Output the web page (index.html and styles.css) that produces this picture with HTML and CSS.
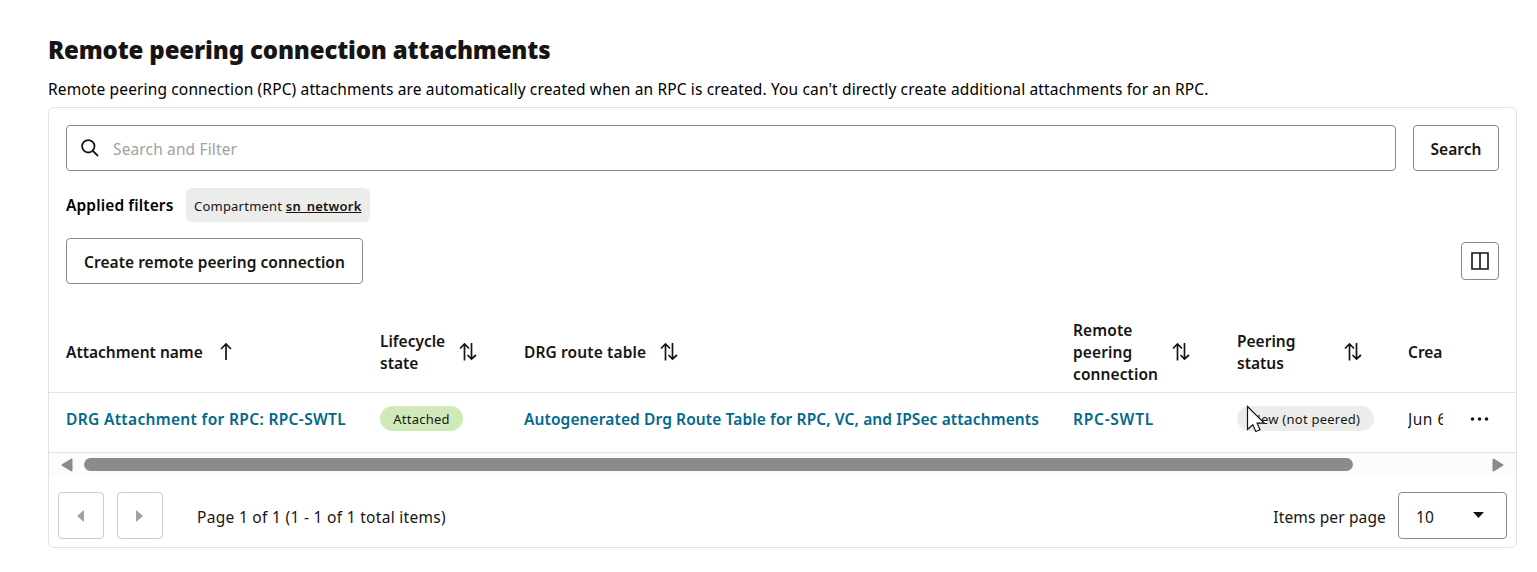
FILE: index.html
```
<!DOCTYPE html>
<html lang="en">
<head>
<meta charset="utf-8">
<title>Remote peering connection attachments</title>
<link rel="stylesheet" href="styles.css">
</head>
<body>
<svg class="sprite" aria-hidden="true">
  <symbol id="sort" viewBox="0 0 18 20"><path d="M5.500 18.500V2M1 6.500 5.500 2 10 6.500M12.500 1V17M8.500 13 12.500 17 17 13"/></symbol>
</svg>
<main class="page">
  <h1 class="title"><span>Remote peering connection attachments</span></h1>
  <p class="subtitle"><span>Remote peering connection (RPC) attachments are automatically created when an RPC is created. You can't directly create additional attachments for an RPC.</span></p>
  <section class="card">
    <div class="search-row">
      <div class="search-box">
        <svg class="search-icon" viewBox="0 0 18 18"><circle cx="7.300" cy="7.300" r="6.200"/><path d="m11.800 11.800 5.200 5.200"/></svg>
        <span class="placeholder">Search and Filter</span>
      </div>
      <button class="btn search-btn"><span>Search</span></button>
    </div>
    <div class="filters">
      <span class="filters-label">Applied filters</span>
      <span class="chip"><span>Compartment <b>sn_network</b></span></span>
    </div>
    <div class="toolbar">
      <button class="btn create-btn"><span>Create remote peering connection</span></button>
      <button class="btn columns-btn" aria-label="Columns"><svg viewBox="0 0 18 18"><path d="M1 1H17V17H1ZM9 1V17"/></svg></button>
    </div>
    <div class="grid head">
      <div class="cell"><span>Attachment name</span><svg class="sort up" viewBox="0 0 12 20"><path d="M6 18V2M1 7 6 2 11 7"/></svg></div>
      <div class="cell"><span>Lifecycle<br>state</span><svg class="sort"><use href="#sort"/></svg></div>
      <div class="cell route-head"><span>DRG route table</span><svg class="sort"><use href="#sort"/></svg></div>
      <div class="cell remote-head"><span>Remote<br>peering<br>connection</span><svg class="sort"><use href="#sort"/></svg></div>
      <div class="cell status-head"><span>Peering<br>status</span><svg class="sort"><use href="#sort"/></svg></div>
      <div class="cell clip"><span>Crea</span></div>
    </div>
    <div class="grid row">
      <div class="cell"><a class="link name-link">DRG Attachment for RPC: RPC-SWTL</a></div>
      <div class="cell"><span class="badge green">Attached</span></div>
      <div class="cell"><a class="link table-link">Autogenerated Drg Route Table for RPC, VC, and IPSec attachments</a></div>
      <div class="cell"><a class="link rpc-link">RPC-SWTL</a></div>
      <div class="cell pointer-host"><span class="badge grey">New (not peered)</span>
        <svg class="pointer" viewBox="0 0 20 28"><path d="M1.500 1.500V24.500L6.800 19.800 9.800 26.500 14 24.700 11.200 18.200H18.200Z"/></svg>
      </div>
      <div class="cell clip date"><span>Jun 6</span></div>
      <div class="cell more"><svg viewBox="0 0 18 4"><circle cx="2" cy="2" r="1.800"/><circle cx="9" cy="2" r="1.800"/><circle cx="16" cy="2" r="1.800"/></svg></div>
    </div>
    <div class="scrollbar">
      <svg class="arrow" viewBox="0 0 12 14"><path d="M10.500 1.500V12.500L1.500 7Z"/></svg>
      <div class="track"><div class="thumb"></div></div>
      <svg class="arrow" viewBox="0 0 12 14"><path d="M1.500 1.500V12.500L10.500 7Z"/></svg>
    </div>
    <div class="pager">
      <button class="btn page-btn" aria-label="Previous"><svg viewBox="0 0 7 14"><path d="M7 1V13L0 7Z"/></svg></button>
      <button class="btn page-btn" aria-label="Next"><svg viewBox="0 0 7 14"><path d="M0 1V13L7 7Z"/></svg></button>
      <span class="page-info">Page 1 of 1 (1 - 1 of 1 total items)</span>
      <span class="per-page">Items per page</span>
      <div class="select"><span>10</span><svg viewBox="0 0 11 6"><path d="M0 0H11L5.500 6Z"/></svg></div>
    </div>
  </section>
</main>
</body>
</html>
```
FILE: styles.css
```
* { box-sizing: border-box; }
body { margin: 0; background: #fff; color: #161513; font: 400 15.5px/22px "Noto Sans", "Open Sans", sans-serif; letter-spacing: 0.14px; white-space: nowrap; }
svg { display: block; flex: none; }
.sprite { position: absolute; width: 0; height: 0; }
.page { padding: 33px 20px 0 48px; }
.title { margin: 0; font-size: 24px; line-height: 34px; font-weight: 900; letter-spacing: -0.16px; }
.subtitle { margin: 11px 0 7px; line-height: 22px; color: #000; }
.card { width: 1469px; height: 441px; border: 1px solid #e3e2e1; border-radius: 6px; }
.btn { display: flex; align-items: center; justify-content: center; padding: 2px 0 0; border: 1px solid #8b8a89; border-radius: 4px; background: #fff; color: #161513; font: inherit; font-weight: 600; letter-spacing: 0.03px; }
.search-row { display: flex; justify-content: space-between; padding: 17px 17px 0; }
.search-box { display: flex; align-items: center; width: 1330px; height: 46px; padding-left: 14px; border: 1px solid #8b8a89; border-radius: 4px; }
.search-icon { width: 18px; height: 18px; fill: none; stroke: #161513; stroke-width: 1.800; }
.placeholder { margin-left: 14px; padding-top: 2px; color: #a3a2a1; }
.search-btn { width: 86px; height: 46px; }
.filters { display: flex; align-items: center; padding: 17px 17px 0; }
.filters-label { width: 120px; font-weight: 600; letter-spacing: 0.12px; color: #000; }
.chip { display: flex; align-items: center; width: 184px; height: 34px; padding: 2px 0 0 8px; border-radius: 6px; background: #ececeb; font-size: 13px; letter-spacing: 0.22px; }
.chip b { font-weight: 600; text-decoration: underline; text-decoration-skip-ink: none; }
.toolbar { display: flex; align-items: center; justify-content: space-between; padding: 16px 17px 0; }
.create-btn { width: 297px; height: 46px; }
.columns-btn { width: 38px; height: 38px; padding: 0 1px 0 0; }
.columns-btn svg { width: 18px; height: 18px; fill: none; stroke: #161513; stroke-width: 1.600; }
.grid { display: grid; grid-template-columns: 314px 144px 549px 164px 171px 35px 1fr; padding-left: 17px; border-bottom: 1px solid #e3e2e1; }
.cell { display: flex; align-items: center; }
.head { height: 81px; margin-top: 28px; font-weight: 600; letter-spacing: 0; align-items: center; }
.head .cell { gap: 14px; }
.sort { width: 18px; height: 20px; fill: none; stroke: #161513; stroke-width: 1.700; }
.sort.up { width: 12px; margin-left: 3px; }
.status-head .sort { margin-left: 35px; }
.head .route-head { letter-spacing: 0.12px; }
.head .remote-head { letter-spacing: 0.1px; }
.clip { overflow: hidden; }
.row { height: 60px; padding-bottom: 7px; }
.link { color: #00688c; font-weight: 600; letter-spacing: 0.11px; }
.name-link { letter-spacing: 0.34px; }
.rpc-link { letter-spacing: 0.75px; }
.badge { display: flex; align-items: center; justify-content: center; height: 25px; margin-bottom: 1px; padding-top: 1px; border-radius: 13px; font-size: 13px; letter-spacing: 0.25px; }
.green { width: 83px; background: #cfeab8; }
.grey { width: 137px; background: #ececeb; }
.date { letter-spacing: 0.5px; }
.pointer-host { position: relative; }
.pointer { position: absolute; left: 9px; top: 12px; width: 20px; height: 28px; fill: #fff; stroke: #161513; stroke-width: 1.200; }
.more { padding-left: 27px; }
.more svg { width: 19px; height: 4px; fill: #161513; }
.scrollbar { display: flex; align-items: center; height: 23px; padding: 0 12px; background: #fcfcfc; }
.arrow { width: 12px; height: 14px; fill: #8b8b8b; stroke: #8b8b8b; stroke-width: 2; stroke-linejoin: round; }
.track { flex: 1; padding: 0 11px; }
.thumb { width: 1269px; height: 13px; border-radius: 7px; background: #8b8b8b; }
.pager { display: flex; align-items: center; padding: 16px 9px 0; }
.page-btn { width: 46px; height: 47px; margin-right: 13px; padding: 0 1px 0 0; border-color: #cccbca; }
.page-btn svg { width: 7px; height: 14px; fill: #a3a2a1; }
.page-info { margin-left: 21px; padding-top: 3px; letter-spacing: 0.3px; }
.per-page { margin-left: auto; padding-top: 3px; }
.select { display: flex; align-items: center; justify-content: space-between; width: 109px; height: 47px; margin-left: 12px; padding: 2px 22px 0 17px; border: 1px solid #8b8a89; border-radius: 4px; }
.select svg { width: 11px; height: 6px; margin-top: -3px; fill: #161513; }
```
